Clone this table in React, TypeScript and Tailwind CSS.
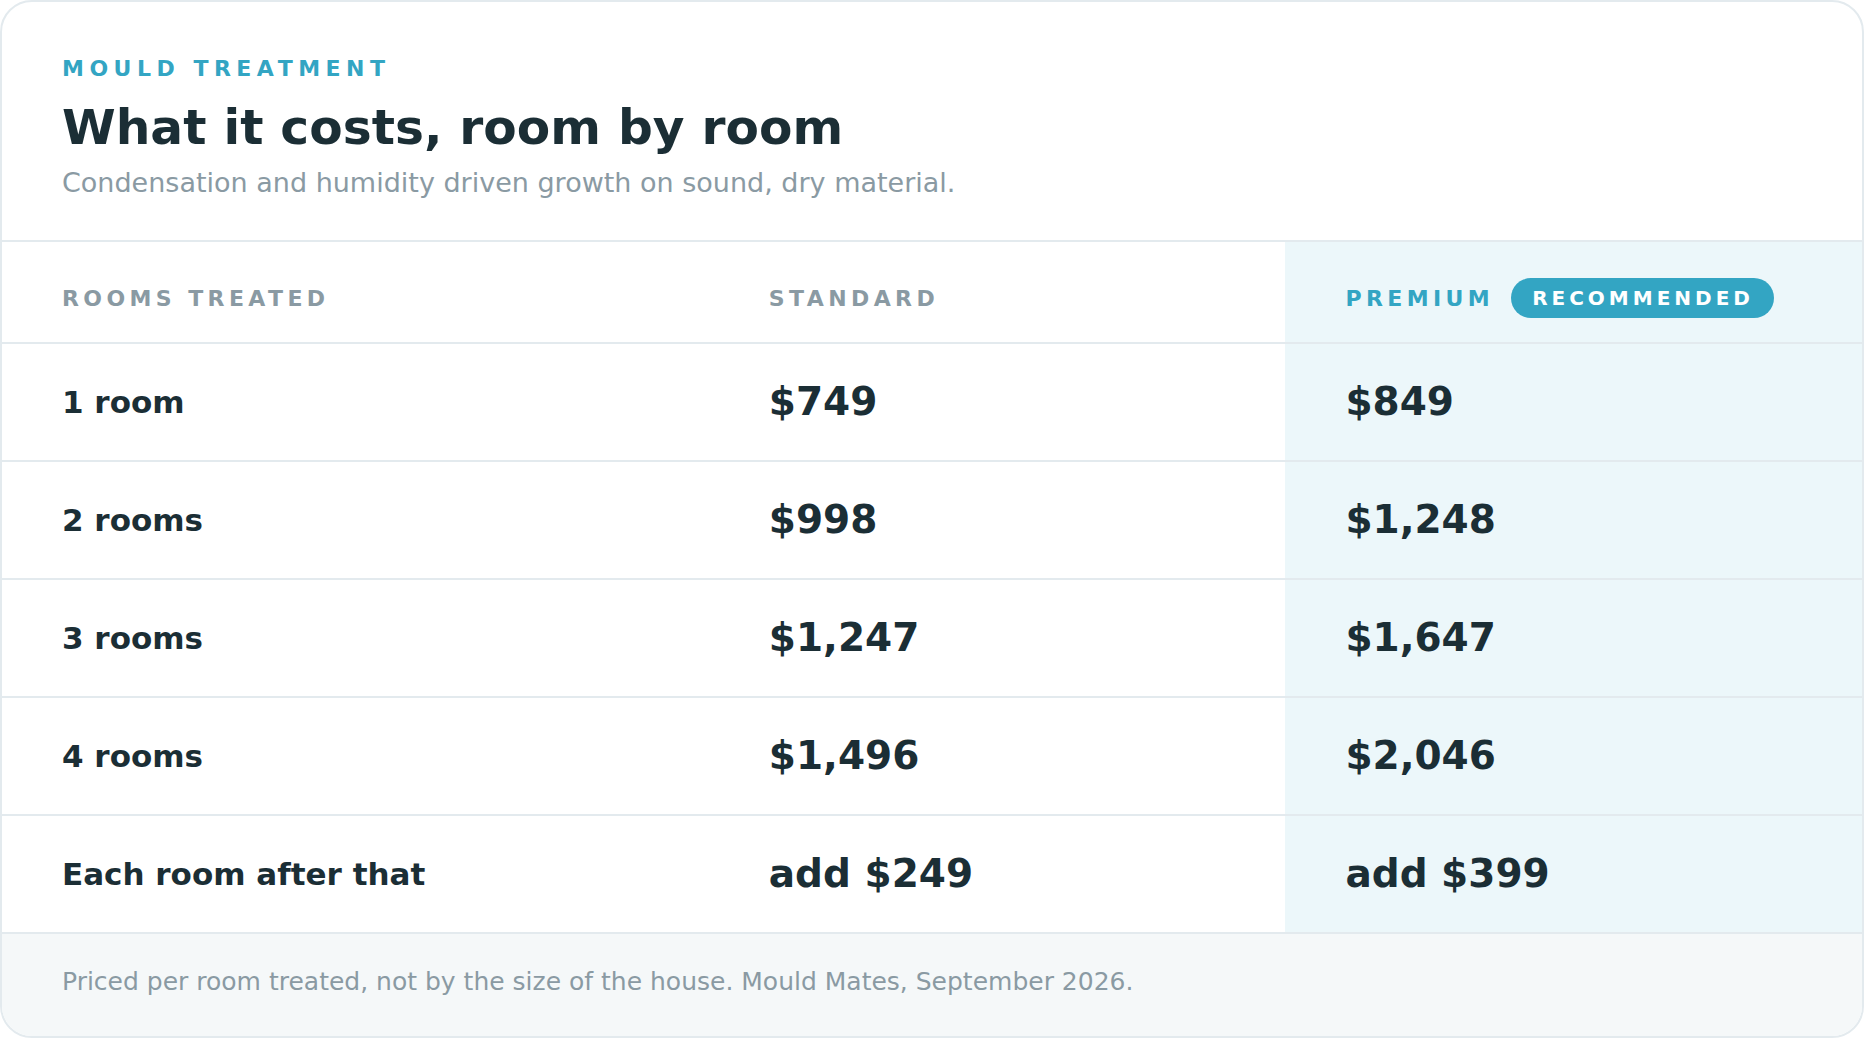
import React from "react";

const rows = [
  { label: "1 room", std: "$749", prem: "$849" },
  { label: "2 rooms", std: "$998", prem: "$1,248" },
  { label: "3 rooms", std: "$1,247", prem: "$1,647" },
  { label: "4 rooms", std: "$1,496", prem: "$2,046" },
  { label: "Each room after that", std: "add $249", prem: "add $399" },
];

export default function App() {
  return (
    <div
      className="w-[1864px] h-[1038px] bg-white"
      style={{ fontFamily: '"DejaVu Sans", "Liberation Sans", sans-serif' }}
    >
      <div className="h-full w-full rounded-[32px] border-2 border-[#e3eaee] bg-white overflow-hidden flex flex-col">
        <div className="px-[60px] pt-[53px] pb-[40px] border-b-2 border-[#e3eaee]">
          <div className="text-[22px] leading-[28px] font-bold tracking-[0.25em] text-[#33a5c3]">
            MOULD TREATMENT
          </div>
          <h1 className="mt-[16px] text-[48.7px] leading-[56px] font-bold text-[#1b2e35]">
            What it costs, room by room
          </h1>
          <p className="mt-[11px] text-[27px] leading-[34px] text-[#8a9aa3]">
            Condensation and humidity driven growth on sound, dry material.
          </p>
        </div>

        <div className="grid grid-cols-[38%_31%_31%]">
          <div className="flex items-center px-[60px] pt-[36px] pb-[24px] border-b-2 border-[#e3eaee]">
            <div className="h-10 flex items-center text-[22px] font-bold tracking-[0.2em] text-[#8a9aa3]">
              ROOMS TREATED
            </div>
          </div>
          <div className="flex items-center px-[60px] pt-[36px] pb-[24px] border-b-2 border-[#e3eaee]">
            <div className="h-10 flex items-center text-[22px] font-bold tracking-[0.2em] text-[#8a9aa3]">
              STANDARD
            </div>
          </div>
          <div className="flex items-center gap-[17px] px-[60px] pt-[36px] pb-[24px] border-b-2 border-[#e3eaee] bg-[#ecf7fa]">
            <div className="h-10 flex items-center text-[22px] font-bold tracking-[0.2em] text-[#33a5c3]">
              PREMIUM
            </div>
            <div className="h-10 flex items-center rounded-full bg-[#33a5c3] pl-[21px] pr-[20px] text-[20px] font-bold tracking-[0.2em] text-white">
              RECOMMENDED
            </div>
          </div>

          {rows.map((r) => (
            <React.Fragment key={r.label}>
              <div className="h-[118px] flex items-center px-[60px] border-b-2 border-[#e3eaee] text-[31px] font-bold text-[#1b2e35]">
                {r.label}
              </div>
              <div className="h-[118px] flex items-center px-[60px] border-b-2 border-[#e3eaee] text-[39px] font-bold text-[#1b2e35]">
                {r.std}
              </div>
              <div className="h-[118px] flex items-center px-[60px] border-b-2 border-[#e3eaee] bg-[#ecf7fa] text-[39px] font-bold text-[#1b2e35]">
                {r.prem}
              </div>
            </React.Fragment>
          ))}
        </div>

        <div className="flex-1 flex items-center px-[60px] pb-[7px] bg-[#f5f8f9] text-[25px] text-[#8a9aa3]">
          Priced per room treated, not by the size of the house. Mould Mates, September 2026.
        </div>
      </div>
    </div>
  );
}
